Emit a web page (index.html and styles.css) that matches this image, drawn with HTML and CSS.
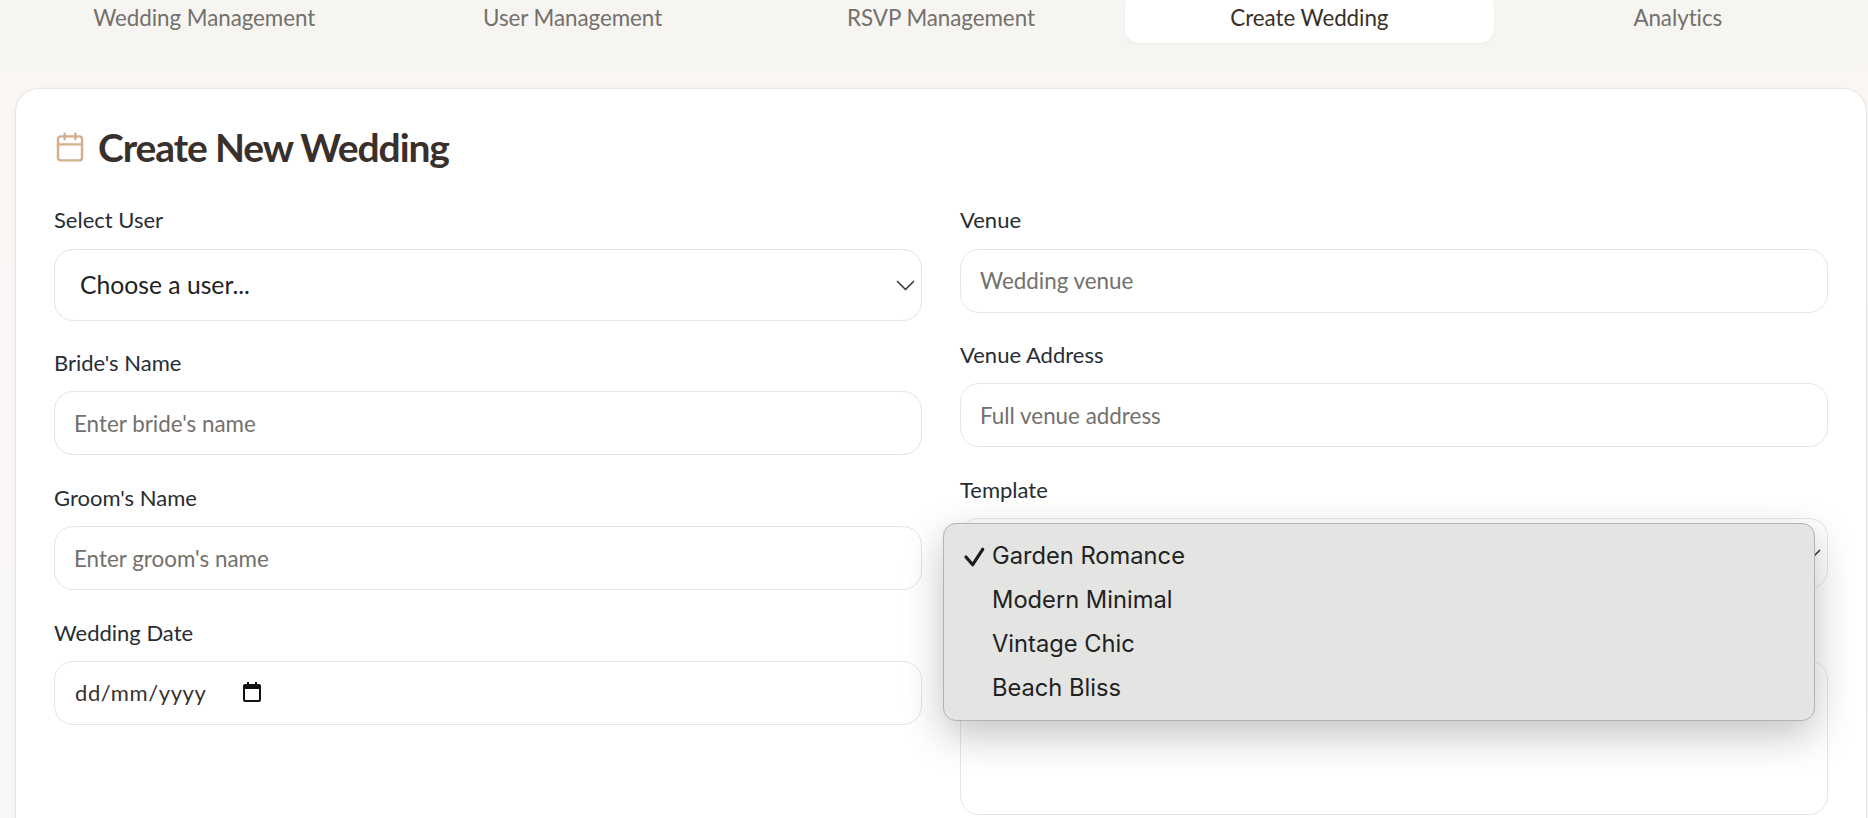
FILE: index.html
```html
<!DOCTYPE html>
<html lang="en">
<head>
<meta charset="utf-8">
<title>Create Wedding</title>
<link rel="stylesheet" href="styles.css">
</head>
<body>
<nav class="tabs">
  <div class="tab">Wedding Management</div>
  <div class="tab">User Management</div>
  <div class="tab">RSVP Management</div>
  <div class="tab active">Create Wedding</div>
  <div class="tab">Analytics</div>
</nav>
<main class="card">
  <h1 class="title">
    <svg class="title-icon" viewBox="0 0 24 24" fill="none" stroke="#d2ae8b" stroke-width="1.8" stroke-linecap="round" stroke-linejoin="round"><path d="M8 2v4"/><path d="M16 2v4"/><rect x="3" y="4" width="18" height="18" rx="2"/><path d="M3 10h18"/></svg>
    Create New Wedding
  </h1>
  <div class="form">
    <div class="col">
      <div class="field">
        <label class="label">Select User</label>
        <div class="select">
          <span>Choose a user...</span>
          <svg class="chevron" viewBox="0 0 19 11" fill="none" stroke="#3f3a37" stroke-width="1.7" stroke-linecap="round" stroke-linejoin="round"><path d="M1.500 1.500 9.500 9.500l8-8"/></svg>
        </div>
      </div>
      <div class="field"><label class="label">Bride's Name</label><input class="input" placeholder="Enter bride's name"></div>
      <div class="field"><label class="label">Groom's Name</label><input class="input" placeholder="Enter groom's name"></div>
      <div class="field">
        <label class="label">Wedding Date</label>
        <div class="date">
          <span class="date-text">dd/mm/yyyy</span>
          <svg class="date-icon" viewBox="0 0 20 20"><path fill="#111" fill-rule="evenodd" d="M5 0h2v2h6V0h2v2h2a2 2 0 0 1 2 2v14a2 2 0 0 1-2 2H3a2 2 0 0 1-2-2V4a2 2 0 0 1 2-2h2zM3 7v10.500a.5.5 0 0 0 .5.5h13a.5.5 0 0 0 .5-.5V7z"/></svg>
        </div>
      </div>
    </div>
    <div class="col">
      <div class="field"><label class="label">Venue</label><input class="input" placeholder="Wedding venue"></div>
      <div class="field"><label class="label">Venue Address</label><input class="input" placeholder="Full venue address"></div>
      <div class="field">
        <label class="label">Template</label>
        <div class="select select-template">
          <span></span>
          <svg class="chevron" viewBox="0 0 19 11" fill="none" stroke="#3f3a37" stroke-width="1.7" stroke-linecap="round" stroke-linejoin="round"><path d="M1.500 1.500 9.500 9.500l8-8"/></svg>
        </div>
      </div>
      <div class="field"><div class="label label-covered"></div><div class="textarea"></div></div>
    </div>
  </div>
  <ul class="menu">
    <li class="option"><svg class="check" viewBox="0 0 20 22" fill="none" stroke="#1c1c1c" stroke-width="3.200" stroke-linecap="round" stroke-linejoin="round"><path d="M2 13 8.700 20.700 18.700 5.300"/></svg>Garden Romance</li>
    <li class="option"><span class="check"></span>Modern Minimal</li>
    <li class="option"><span class="check"></span>Vintage Chic</li>
    <li class="option"><span class="check"></span>Beach Bliss</li>
  </ul>
</main>
</body>
</html>
```
FILE: styles.css
```css
* { box-sizing: border-box; }
html, body { height: 100%; }
body {
  margin: 0;
  overflow: hidden;
  background: linear-gradient(180deg, #f6f5f2 0, #f7f6f3 40px, #faf7f5 90px, #f9f7f7 100%);
  font-family: Lato, "Liberation Sans", sans-serif;
  color: #3a302b;
}
.tabs {
  display: grid;
  grid-template-columns: repeat(5, 1fr);
  margin: -7px 1px 0 15px;
  height: 55px;
  padding: 0 5px 5px;
  background: #f6f5f2;
  border-radius: 0 0 16px 16px;
}
.tab {
  display: flex;
  align-items: center;
  justify-content: center;
  padding-bottom: 2px;
  font-size: 22.4px;
  color: #74706b;
  letter-spacing: -0.06px;
  border-radius: 14px;
}
.tab.active {
  background: #fff;
  color: #3a302b;
  box-shadow: 0 1px 3px rgba(0,0,0,.05);
}
.card {
  position: relative;
  height: 800px;
  margin: 40px 1px 0 15px;
  padding: 34px 38px 0 38px;
  background: #fff;
  border: 1px solid #e9e7e4;
  border-radius: 24px;
  box-shadow: 0 1px 6px rgba(0,0,0,.04);
}
.title {
  display: flex;
  align-items: center;
  gap: 12px;
  margin: 0 0 35px;
  height: 48px;
  font-size: 39px;
  font-weight: 700;
  letter-spacing: -1.1px;
  color: #3a302b;
}
.title-icon { width: 32px; height: 32px; flex: none; }
.form {
  display: grid;
  grid-template-columns: 1fr 1fr;
  column-gap: 38px;
}
.col { display: flex; flex-direction: column; gap: 28.3px; }
.field { display: flex; flex-direction: column; gap: 14.6px; }
.label {
  font-size: 22px;
  line-height: 28px;
  color: #272d33;
}
.label-covered { height: 28px; }
.input, .select, .date, .textarea {
  width: 100%;
  background: #fff;
  border: 1px solid #e6e5e3;
  border-radius: 19px;
}
.input {
  height: 64px;
  padding: 0 19px;
  font: 22.4px Lato, "Liberation Sans", sans-serif;
  color: #3a302b;
  outline: none;
}
.input::placeholder { color: #74706b; opacity: 1; }
.select {
  display: flex;
  align-items: center;
  justify-content: space-between;
  height: 72px;
  padding: 0 6px 0 25px;
  font-size: 24.7px;
  color: #222;
}
.select-template { height: 71px; }
.chevron { width: 19px; height: 11px; margin-top: 1px; flex: none; }
.date {
  display: flex;
  align-items: center;
  gap: 36px;
  height: 64px;
  padding: 0 20px 2px;
}
.date-text {
  font-size: 22px;
  color: #3a302b;
  letter-spacing: .6px;
}
.date-icon { width: 20px; height: 20px; flex: none; }
.textarea { height: 155px; }
.menu {
  position: absolute;
  left: 927px;
  top: 434px;
  width: 872px;
  height: 198px;
  margin: 0;
  padding: 9px 0;
  list-style: none;
  background: #e4e4e2;
  border: 1px solid #b3b3b1;
  border-radius: 13px;
  box-shadow: 0 14px 40px rgba(0,0,0,.24);
}
.option {
  display: flex;
  align-items: center;
  height: 44px;
  font-family: Inter, "Liberation Sans", sans-serif;
  font-size: 23.7px;
  color: #222;
}
.check {
  width: 20px;
  height: 22px;
  margin: 0 8px 0 20px;
  flex: none;
  overflow: visible;
}
```
